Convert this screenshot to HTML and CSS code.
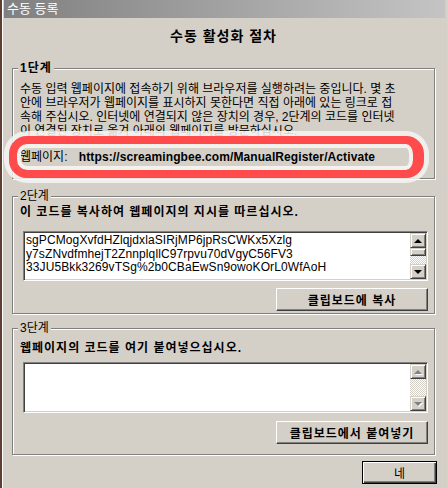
FILE: index.html
```html
<!DOCTYPE html>
<html lang="ko">
<head>
    <meta charset="UTF-8">
    <title>수동 등록</title>
    <link rel="stylesheet" href="styles.css">
</head>
<body>
    <div class="window">
        <div class="titlebar">수동 등록</div>
        <div class="content">
            <h1 class="heading">수동 활성화 절차</h1>

            <!-- 1단계 -->
            <section class="group step1">
                <div class="group-title bold">1단계</div>
                <p class="note">수동 입력 웹페이지에 접속하기 위해 브라우저를 실행하려는 중입니다. 몇 초<br>안에 브라우저가 웹페이지를 표시하지 못한다면 직접 아래에 있는 링크로 접<br>속해 주십시오. 인터넷에 연결되지 않은 장치의 경우, 2단계의 코드를 인터넷<br>이 연결된 장치로 옮겨 아래의 웹페이지를 방문하십시오.</p>
                <div class="url-row">
                    <span class="url-label">웹페이지:</span>
                    <span class="url">https://screamingbee.com/ManualRegister/Activate</span>
                    <div class="highlight"></div>
                </div>
            </section>

            <!-- 2단계 -->
            <section class="group step2">
                <div class="group-title">2단계</div>
                <div class="instruction bold">이 코드를 복사하여 웹페이지의 지시를 따르십시오.</div>
                <div class="edit">
                    <div class="edit-text code">sgPCMogXvfdHZlqjdxlaSIRjMP6jpRsCWKx5Xzlg<br>y7sZNvdfmhejT2ZnnplqllC97rpvu70dVgyC56FV3<br>33JU5Bkk3269vTSg%2b0CBaEwSn9owoKOrL0WfAoH</div>
                    <div class="scrollbar">
                        <div class="sb-btn"><span class="arrow up"></span></div>
                        <div class="sb-thumb"></div>
                        <div class="sb-track"></div>
                        <div class="sb-btn"><span class="arrow down"></span></div>
                    </div>
                </div>
                <div class="actions"><button class="btn bold">클립보드에 복사</button></div>
            </section>

            <!-- 3단계 -->
            <section class="group step3">
                <div class="group-title">3단계</div>
                <div class="instruction bold">웹페이지의 코드를 여기 붙여넣으십시오.</div>
                <div class="edit">
                    <div class="edit-text"></div>
                    <div class="scrollbar">
                        <div class="sb-btn"><span class="arrow up disabled"></span></div>
                        <div class="sb-track"></div>
                        <div class="sb-btn"><span class="arrow down disabled"></span></div>
                    </div>
                </div>
                <div class="actions"><button class="btn bold">클립보드에서 붙여넣기</button></div>
            </section>

            <div class="footer"><button class="btn btn-default">네</button></div>
        </div>
    </div>
</body>
</html>
```

FILE: styles.css
```css
body {
    margin: 0;
    background: #5e3e30;
    font-family: "Liberation Sans", "Noto Sans CJK KR", sans-serif;
    font-size: 12px;
    color: #000;
}

/* 창 */
.window {
    margin-left: 2px;
    height: 488px;
    padding: 0 2px;
    background: #d4d0c8;
    box-shadow: inset 1px 0 0 #fff;
    overflow: hidden;
}

.titlebar {
    height: 18px;
    line-height: 18px;
    padding-left: 3px;
    font-size: 13px;
    color: #fff;
    background: linear-gradient(to right, #808080, #c4c4c4);
}

.content {
    padding: 0 10px 0 8px;
}

.heading {
    margin: 10px 0 0;
    font-size: 14px;
    line-height: 16px;
    font-weight: bold;
    letter-spacing: 1px;
    text-align: center;
}

.bold {
    font-weight: bold;
    letter-spacing: 1px;
}

/* 그룹 박스 */
.group {
    border: 1px solid #808080;
    box-shadow: inset 1px 1px 0 #fff, 1px 1px 0 #fff;
    padding: 0 6px 12px 7px;
}

.group-title {
    width: fit-content;
    margin: -8px 0 0 -2px;
    padding: 0 2px;
    line-height: 14px;
    background: #d4d0c8;
}

.step1 { margin-top: 24px; }
.step2 { margin-top: 17px; padding-bottom: 2px; }
.step3 { margin-top: 14px; padding-bottom: 10px; }

.note {
    margin: 7px 0 0;
    line-height: 14px;
    white-space: nowrap;
}

/* 웹페이지 주소 */
.url-row {
    position: relative;
    margin: 10px 18px 0 0;
    height: 18px;
    line-height: 18px;
    white-space: nowrap;
}

.url {
    margin-left: 8px;
    font-size: 12px;
    font-weight: bold;
    letter-spacing: 0.1px;
}

.highlight {
    position: absolute;
    top: -12px;
    bottom: -12px;
    left: -11px;
    right: -14px;
    border: 8px solid #ff4b4b;
    border-right-width: 11px;
    border-radius: 18px;
    box-shadow: 0 0 0 5px rgba(246, 245, 241, 0.85), inset 0 0 0 4px rgba(246, 245, 241, 0.9);
}

.instruction {
    margin-top: 2px;
    line-height: 14px;
}

.step3 .instruction { margin-top: 6px; }

/* 입력 상자 */
.edit {
    display: flex;
    height: 50px;
    margin: 12px 0 0 3px;
    background: #fff;
    border: 1px solid;
    border-color: #808080 #fff #fff #808080;
    box-shadow: inset 1px 1px 0 #404040, inset -1px -1px 0 #d4d0c8;
    padding: 1px;
    box-sizing: border-box;
}

.step3 .edit { margin-top: 7px; height: 51px; }

.edit-text {
    flex: 1;
    padding: 1px 0 0 1px;
}

.code {
    font-size: 12px;
    line-height: 13.5px;
    letter-spacing: 0.1px;
    white-space: nowrap;
    overflow: hidden;
}

.scrollbar {
    display: flex;
    flex-direction: column;
    width: 16px;
}

.sb-btn,
.sb-thumb {
    background: #d4d0c8;
    border: 1px solid;
    border-color: #d4d0c8 #404040 #404040 #d4d0c8;
    box-shadow: inset 1px 1px 0 #fff, inset -1px -1px 0 #808080;
    box-sizing: border-box;
}

.sb-btn {
    height: 15px;
    display: flex;
    align-items: center;
    justify-content: center;
}

.sb-thumb {
    height: 8px;
}

.sb-track {
    flex: 1;
    background: repeating-conic-gradient(#d4d0c8 0 25%, #fff 0 50%) 0 0 / 2px 2px;
}

.arrow {
    width: 0;
    height: 0;
    border-left: 4px solid transparent;
    border-right: 4px solid transparent;
}

.arrow.up { border-bottom: 4px solid #000; }
.arrow.down { border-top: 4px solid #000; }
.arrow.up.disabled { border-bottom-color: #808080; filter: drop-shadow(1px 1px 0 #fff); }
.arrow.down.disabled { border-top-color: #808080; filter: drop-shadow(1px 1px 0 #fff); }

/* 버튼 */
.actions {
    display: flex;
    justify-content: flex-end;
    margin-top: 7px;
}

.step3 .actions { margin-top: 8px; }

.btn {
    width: 152px;
    height: 23px;
    padding: 0;
    font-family: inherit;
    font-size: 12px;
    color: #000;
    background: #d4d0c8;
    border: 1px solid;
    border-color: #fff #404040 #404040 #fff;
    box-shadow: inset -1px -1px 0 #808080;
}

.footer {
    display: flex;
    justify-content: flex-end;
    margin: 6px -2px 0 0;
}

.btn-default {
    width: 75px;
    border: 1px solid #000;
    box-shadow: inset 1px 1px 0 #fff, inset -1px -1px 0 #404040, inset -2px -2px 0 #808080;
}
```
